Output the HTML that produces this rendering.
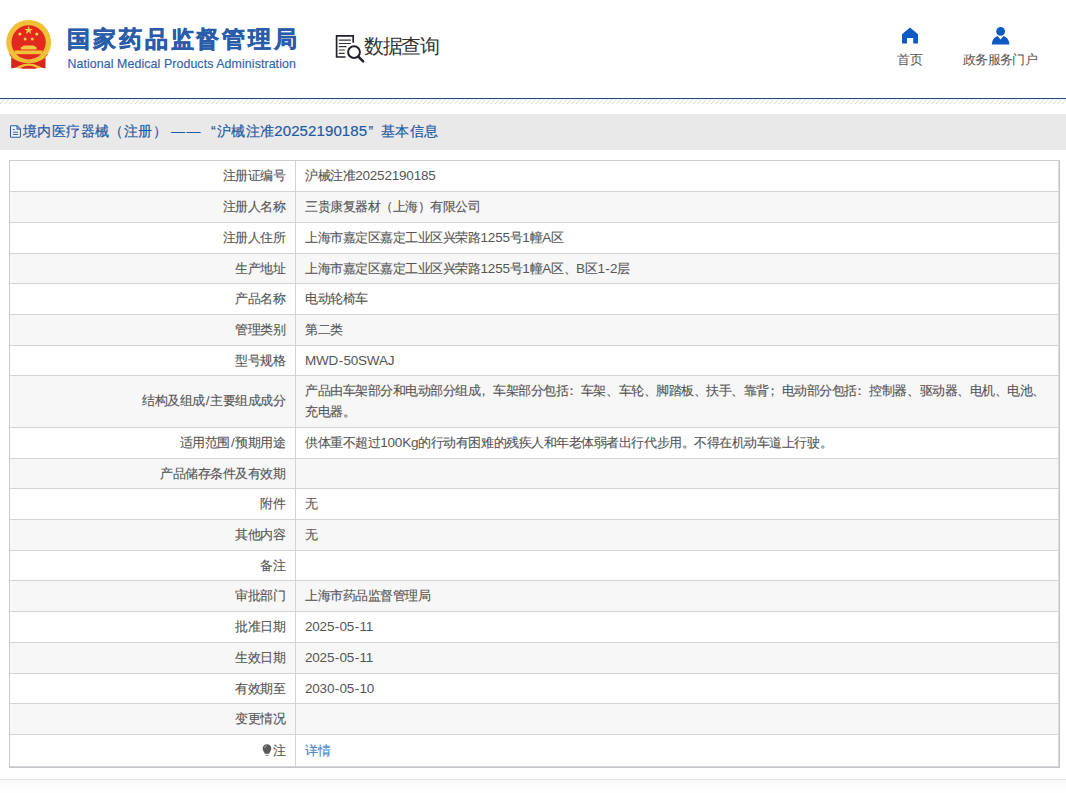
<!DOCTYPE html>
<html><head><meta charset="utf-8">
<style>
*{margin:0;padding:0;box-sizing:border-box}
html,body{width:1066px;height:793px;overflow:hidden;background:#fff}
body{position:relative;font-family:"Liberation Sans",sans-serif;color:#555}
.abs{position:absolute;white-space:nowrap}
#title{left:67px;top:24px;font-size:23px;font-weight:bold;color:#2b5caa;line-height:30px;letter-spacing:2.9px;-webkit-text-stroke:0.5px #2b5caa}
#sub{left:67.5px;top:56px;font-size:12.4px;color:#3561a8;line-height:16px;letter-spacing:0.08px;-webkit-text-stroke:0.15px #3561a8}
#dq{left:364px;top:33px;font-size:20px;color:#333;line-height:26px;letter-spacing:-1.4px}
.nav{font-size:13px;color:#555;line-height:16px}
#line{left:0;top:98px;width:1066px;height:1px;background:#28497a}
#hatch{left:0;top:99px;width:1066px;height:5px;background:repeating-linear-gradient(135deg,#dadada 0 1px,#fff 1px 3.18px)}
#hatch0{left:0;top:99px;width:1066px;height:1px;background:#e3f1fb}
#bar{left:0;top:114px;width:1066px;height:36px;background:#e9e9e9}
.bt{position:absolute;top:120px;font-size:14px;color:#1f5aa6;line-height:22px;white-space:nowrap;letter-spacing:0.4px;-webkit-text-stroke:0.2px #1f5aa6}
#tbl{left:9px;top:160px;width:1051px;height:608px;border:1px solid #cdcdcd;border-right-color:#c4c4c8;border-bottom-color:#c4c4c8}
#rin{position:absolute;right:0;top:0;width:1px;height:606px;background:#dcdcdf}
#bin{position:absolute;left:0;bottom:0;width:1049px;height:1px;background:#d6d6da}
.row{position:absolute;left:0;width:1049px;border-top:1px solid #d4d4d4}
.row.g{background:#f7f7f7}
.lab{position:absolute;left:0;width:275.5px;text-align:right;font-size:13px;color:#555;white-space:nowrap;letter-spacing:-0.46px;-webkit-text-stroke:0.12px #555}
.val{position:absolute;left:295px;font-size:13px;color:#555;white-space:nowrap;letter-spacing:-0.46px;-webkit-text-stroke:0.12px #555}
.a{letter-spacing:-0.2px;font-size:13.5px;-webkit-text-stroke:0}
.hy{margin:0 0.5px}
.sl{margin:0 0.9px}
.pu{position:relative;left:-3.5px}
.bulb{vertical-align:-2px;margin-right:1px}
#vline{left:285px;top:0;width:1px;height:606px;background:#d4d4d4}
#foot{left:0;top:779px;width:1066px;height:1px;background:#e4e4e4}
#foot2{left:0;top:780px;width:1066px;height:13px;background:linear-gradient(#f5f5f5,#fcfcfc 4px,#fff)}
</style></head><body>

<svg class="abs" style="left:0;top:14px" width="60" height="60" viewBox="0 14 60 60">
  <circle cx="28.7" cy="42.3" r="22.4" fill="#f0c136"/>
  <circle cx="28.6" cy="42.3" r="17.1" fill="#e3281f"/>
  <path d="M8 53 Q18 62.5 28.7 61.3 Q39.5 62.5 49 53 L45.5 57 L45.5 68.5 L40 67.2 L35 68.8 L22.5 68.8 L17.5 67.2 L11.2 68.5 L11.2 57 Z" fill="#d9261c"/>
  <path d="M11.5 56 Q20 61.5 28.7 61.3 Q37.5 61.5 45.5 56 L45.5 57.5 Q37.5 63.5 28.7 63.2 Q20 63.5 11.5 57.5 Z" fill="#f0c136"/>
  <path d="M17.5 66.5 Q28.7 60.5 40 66.5 L39 68.8 L35 67 Q28.7 64.5 22.5 67 L18.5 68.8 Z" fill="#f0c136"/>
  <path d="M28.7 25.9 l1.1 3.05 3.2 0 -2.55 1.9 1 3.05 -2.75 -1.9 -2.75 1.9 1 -3.05 -2.55 -1.9 3.2 0z" fill="#f5cf45"/>
  <circle cx="19.9" cy="34" r="1.6" fill="#f5cf45"/>
  <circle cx="36.8" cy="34" r="1.6" fill="#f5cf45"/>
  <circle cx="25.2" cy="39" r="1.5" fill="#f5cf45"/>
  <circle cx="32.2" cy="39" r="1.5" fill="#f5cf45"/>
  <path d="M20.8 47.2 Q23 46.8 23.5 45.6 H33.9 Q34.4 46.8 36.6 47.2 V49.5 H20.8 Z" fill="#f3c845"/>
  <rect x="14.6" y="50.4" width="28" height="3.8" fill="#f0c136"/>
</svg>

<div id="title" class="abs">国家药品监督管理局</div>
<div id="sub" class="abs">National Medical Products Administration</div>

<svg class="abs" style="left:332px;top:32px" width="36" height="32" viewBox="332 32 36 32">
  <path d="M345.5 57 H336.6 V35.8 H353.2 V42.7" fill="none" stroke="#22222c" stroke-width="1.7"/>
  <path d="M339.3 40.1 H350.4 M339.3 43.5 H350.4 M339.3 46.7 H346.1 M339.3 50 H344.3 M339.3 53.4 H344.1" stroke="#33333c" stroke-width="1.2" stroke-linecap="round"/>
  <circle cx="354" cy="52.1" r="5.9" fill="none" stroke="#22222c" stroke-width="2"/>
  <path d="M358.4 56.6 L363.1 61.3" stroke="#22222c" stroke-width="2.6" stroke-linecap="round"/>
</svg>
<div id="dq" class="abs">数据查询</div>

<svg class="abs" style="left:900px;top:26px" width="20" height="20" viewBox="900 26 20 20">
  <path d="M902 34.2 L910 27.6 L918 34.2 V43.6 H913.2 V38 H907 V43.6 H902 Z" fill="#0d5bc2"/>
</svg>
<div class="abs nav" style="left:897px;top:52px">首页</div>
<svg class="abs" style="left:990px;top:25px" width="22" height="22" viewBox="990 25 22 22">
  <circle cx="1000.6" cy="31.4" r="4.4" fill="#0d5bc2"/>
  <path d="M991.7 44.6 Q992.2 37.6 997.6 36 L1000.6 39.4 L1003.6 36 Q1009 37.6 1009.5 44.6 Z" fill="#0d5bc2"/>
</svg>
<div class="abs nav" style="left:963px;top:52px;letter-spacing:-0.7px">政务服务门户</div>

<div id="line" class="abs"></div>
<svg class="abs" style="left:0;top:99px" width="1066" height="6">
  <defs><pattern id="hp" x="0" y="0" width="4.5" height="6" patternUnits="userSpaceOnUse">
    <path d="M-0.6 5.6 L4.4 0.6" stroke="#d2d2d2" stroke-width="0.9"/>
  </pattern></defs>
  <rect x="0" y="0" width="1066" height="6" fill="url(#hp)"/>
  <rect x="0" y="0" width="1066" height="1" fill="#e6f3fb" opacity="0.8"/>
</svg>

<div id="bar" class="abs"></div>
<svg class="abs" style="left:6px;top:120px" width="20" height="22" viewBox="6 120 20 22">
  <path d="M11.2 125.7 H17.2 L20.4 128.9 V136.6 Q20.4 137.3 19.7 137.3 H11.2 Q10.5 137.3 10.5 136.6 V126.4 Q10.5 125.7 11.2 125.7 Z" fill="#e9f4fd" stroke="#2f5f9f" stroke-width="1.05"/>
  <path d="M16.9 125.9 V129.2 H20.3" fill="#8fb2df" stroke="#2f5f9f" stroke-width="0.9"/>
  <path d="M12.9 129.5 H14.9 M12.9 132.2 H18 M12.9 134.5 H18" stroke="#3a5f90" stroke-width="0.95"/>
</svg>
<div class="bt" style="left:23px">境内医疗器械（注册）</div>
<div class="bt" style="left:171px;letter-spacing:1.6px">——</div>
<div class="bt" style="left:211px">“</div>
<div class="bt" style="left:217px">沪械注准</div>
<div class="bt" style="left:274.3px;letter-spacing:0.1px;font-size:15px">20252190185</div>
<div class="bt" style="left:368.5px">”</div>
<div class="bt" style="left:381px">基本信息</div>

<div id="tbl" class="abs">
<div class="row" style="top:-1px;height:32px;border-top:0"></div><div class="lab" style="top:0px;line-height:30px">注册证编号</div><div class="val" style="top:0px;line-height:30px">沪械注准<span class="a">20252190185</span></div>
<div class="row g" style="top:30px;height:32px"></div><div class="lab" style="top:31px;line-height:30px">注册人名称</div><div class="val" style="top:31px;line-height:30px">三贵康复器材（上海）有限公司</div>
<div class="row" style="top:61px;height:32px"></div><div class="lab" style="top:62px;line-height:30px">注册人住所</div><div class="val" style="top:62px;line-height:30px">上海市嘉定区嘉定工业区兴荣路<span class="a">1255</span>号<span class="a">1</span>幢<span class="a">A</span>区</div>
<div class="row g" style="top:92px;height:31px"></div><div class="lab" style="top:93px;line-height:29px">生产地址</div><div class="val" style="top:93px;line-height:29px">上海市嘉定区嘉定工业区兴荣路<span class="a">1255</span>号<span class="a">1</span>幢<span class="a">A</span>区、<span class="a">B</span>区<span class="a">1<span class="hy">-</span>2</span>层</div>
<div class="row" style="top:122px;height:32px"></div><div class="lab" style="top:123px;line-height:30px">产品名称</div><div class="val" style="top:123px;line-height:30px">电动轮椅车</div>
<div class="row g" style="top:153px;height:32px"></div><div class="lab" style="top:154px;line-height:30px">管理类别</div><div class="val" style="top:154px;line-height:30px">第二类</div>
<div class="row" style="top:184px;height:31px"></div><div class="lab" style="top:185px;line-height:29px">型号规格</div><div class="val" style="top:185px;line-height:29px"><span class="a">MWD<span class="hy">-</span>50SWAJ</span></div>
<div class="row g" style="top:214px;height:53px"></div><div class="lab" style="top:231px;line-height:18px">结构及组成<span class="a"><span class="sl">/</span></span>主要组成成分</div><div class="val" style="top:221px;line-height:18px">产品由车架部分和电动部分组成<span class="pu">，</span>车架部分包括<span class="pu">：</span>车架、车轮、脚踏板、扶手、靠背<span class="pu">；</span>电动部分包括<span class="pu">：</span>控制器、驱动器、电机、电池、</div><div class="val" style="top:242px;line-height:18px">充电器。</div>
<div class="row" style="top:266px;height:32px"></div><div class="lab" style="top:267px;line-height:30px">适用范围<span class="a"><span class="sl">/</span></span>预期用途</div><div class="val" style="top:267px;line-height:30px">供体重不超过<span class="a">100Kg</span>的行动有困难的残疾人和年老体弱者出行代步用。不得在机动车道上行驶。</div>
<div class="row g" style="top:297px;height:31px"></div><div class="lab" style="top:298px;line-height:29px">产品储存条件及有效期</div><div class="val" style="top:298px;line-height:29px"></div>
<div class="row" style="top:327px;height:32px"></div><div class="lab" style="top:328px;line-height:30px">附件</div><div class="val" style="top:328px;line-height:30px">无</div>
<div class="row g" style="top:358px;height:32px"></div><div class="lab" style="top:359px;line-height:30px">其他内容</div><div class="val" style="top:359px;line-height:30px">无</div>
<div class="row" style="top:389px;height:31px"></div><div class="lab" style="top:390px;line-height:29px">备注</div><div class="val" style="top:390px;line-height:29px"></div>
<div class="row g" style="top:419px;height:32px"></div><div class="lab" style="top:420px;line-height:30px">审批部门</div><div class="val" style="top:420px;line-height:30px">上海市药品监督管理局</div>
<div class="row" style="top:450px;height:32px"></div><div class="lab" style="top:451px;line-height:30px">批准日期</div><div class="val" style="top:451px;line-height:30px"><span class="a">2025<span class="hy">-</span>05<span class="hy">-</span>11</span></div>
<div class="row g" style="top:481px;height:32px"></div><div class="lab" style="top:482px;line-height:30px">生效日期</div><div class="val" style="top:482px;line-height:30px"><span class="a">2025<span class="hy">-</span>05<span class="hy">-</span>11</span></div>
<div class="row" style="top:512px;height:31px"></div><div class="lab" style="top:513px;line-height:29px">有效期至</div><div class="val" style="top:513px;line-height:29px"><span class="a">2030<span class="hy">-</span>05<span class="hy">-</span>10</span></div>
<div class="row g" style="top:542px;height:32px"></div><div class="lab" style="top:543px;line-height:30px">变更情况</div><div class="val" style="top:543px;line-height:30px"></div>
<div class="row" style="top:573px;height:33px"></div><div class="lab" style="top:574px;line-height:31px"><svg class="bulb" width="10" height="14" viewBox="0 0 10 14"><path d="M5 1.2 C7.6 1.2 9.3 3 9.3 5.4 C9.3 7.3 8 8.4 7.2 10.8 H2.8 C2 8.4 0.7 7.3 0.7 5.4 C0.7 3 2.4 1.2 5 1.2 Z" fill="#595959"/><path d="M3.6 12.3 H6.4" stroke="#777" stroke-width="1"/><path d="M2.6 5 Q3 3 4.6 2.6" stroke="#ddd" stroke-width="0.7" fill="none"/></svg>注</div><div class="val" style="top:574px;line-height:31px"><span style="color:#3b8ee8">详情</span></div>
<div id="vline" class="abs"></div>
<div id="rin"></div><div id="bin"></div>
</div>

<div id="foot" class="abs"></div>
<div id="foot2" class="abs"></div>
</body></html>
